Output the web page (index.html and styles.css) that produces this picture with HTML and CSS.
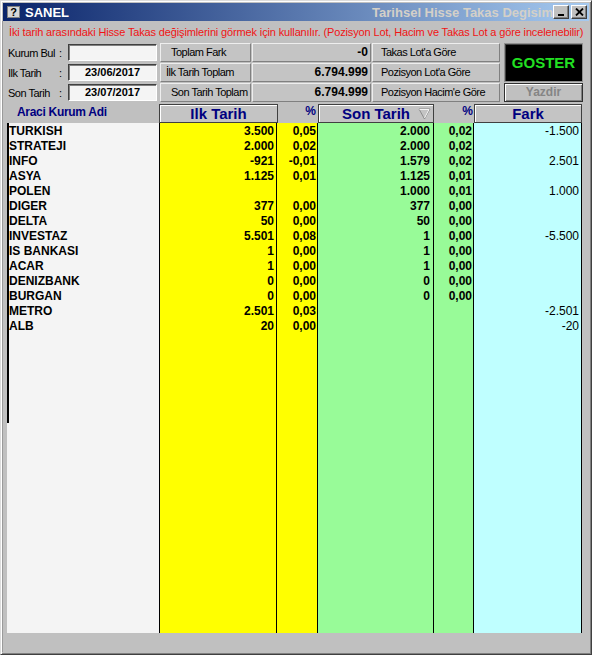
FILE: index.html
```html
<!DOCTYPE html>
<html>
<head>
<meta charset="utf-8">
<link rel="stylesheet" href="styles.css">
</head>
<body>
<div class="window">
  <div class="titlebar">
    <span class="ticon">?</span>
    <span class="ttitle">SANEL</span>
    <span class="tsub">Tarihsel Hisse Takas Degisim</span>
    <span class="tbtns">
      <span class="tbtn"><svg width="8" height="8" viewBox="0 0 8 8"><rect x="1" y="6" width="6" height="2" fill="#000"/></svg></span>
      <span class="tbtn"><svg width="9" height="8" viewBox="0 0 9 8"><path d="M1 0.5 L8 7.5 M8 0.5 L1 7.5" stroke="#000" stroke-width="1.8"/></svg></span>
    </span>
  </div>
  <div class="client">
    <div class="info">İki tarih arasındaki Hisse Takas değişimlerini görmek için kullanılır. (Pozisyon Lot, Hacim ve Takas Lot a göre incelenebilir)</div>
    <div class="controls">
      <div class="lbl"><span class="lname">Kurum Bul</span><span>:</span></div>
      <div class="inp"></div>
      <div class="btn">Toplam Fark</div>
      <div class="val">-0</div>
      <div class="btn btn-r">Takas Lot'a Göre</div>
      <div class="goster">GOSTER</div>

      <div class="lbl"><span class="lname">Ilk Tarih</span><span>:</span></div>
      <div class="inp">23/06/2017</div>
      <div class="btn btn-i">İlk Tarih Toplam</div>
      <div class="val">6.794.999</div>
      <div class="btn btn-r">Pozisyon Lot'a Göre</div>

      <div class="lbl"><span class="lname">Son Tarih</span><span>:</span></div>
      <div class="inp">23/07/2017</div>
      <div class="btn">Son Tarih Toplam</div>
      <div class="val">6.794.999</div>
      <div class="btn btn-r">Pozisyon Hacim'e Göre</div>
      <div class="yazdir">Yazdir</div>
    </div>
    <div class="grid">
      <div class="ghead">
        <div class="h-name">Araci Kurum Adi</div>
        <div class="h-box h-ilk">Ilk Tarih</div>
        <div class="h-pct h-p1">%</div>
        <div class="h-box h-son">Son Tarih<svg class="sort" width="13" height="12" viewBox="0 0 13 12"><path d="M1 1 L12 1 L6.5 11 Z" fill="none" stroke="#8c8c8c" stroke-width="1"/><path d="M1.5 1.5 L11 1.5 L6.5 10" fill="none" stroke="#f4f4f4" stroke-width="1"/></svg></div>
        <div class="h-pct h-p2">%</div>
        <div class="h-box h-fark">Fark</div>
      </div>
      <div class="gbody">
        <div class="c c-name">
          <div class="r">TURKISH</div><div class="r">STRATEJI</div><div class="r">INFO</div><div class="r">ASYA</div><div class="r">POLEN</div><div class="r">DIGER</div><div class="r">DELTA</div><div class="r">INVESTAZ</div><div class="r">IS BANKASI</div><div class="r">ACAR</div><div class="r">DENIZBANK</div><div class="r">BURGAN</div><div class="r">METRO</div><div class="r">ALB</div>
        </div>
        <div class="c c-ilk">
          <div class="r">3.500</div><div class="r">2.000</div><div class="r">-921</div><div class="r">1.125</div><div class="r"></div><div class="r">377</div><div class="r">50</div><div class="r">5.501</div><div class="r">1</div><div class="r">1</div><div class="r">0</div><div class="r">0</div><div class="r">2.501</div><div class="r">20</div>
        </div>
        <div class="c c-p1">
          <div class="r">0,05</div><div class="r">0,02</div><div class="r">-0,01</div><div class="r">0,01</div><div class="r"></div><div class="r">0,00</div><div class="r">0,00</div><div class="r">0,08</div><div class="r">0,00</div><div class="r">0,00</div><div class="r">0,00</div><div class="r">0,00</div><div class="r">0,03</div><div class="r">0,00</div>
        </div>
        <div class="c c-son">
          <div class="r">2.000</div><div class="r">2.000</div><div class="r">1.579</div><div class="r">1.125</div><div class="r">1.000</div><div class="r">377</div><div class="r">50</div><div class="r">1</div><div class="r">1</div><div class="r">1</div><div class="r">0</div><div class="r">0</div><div class="r"></div><div class="r"></div>
        </div>
        <div class="c c-p2">
          <div class="r">0,02</div><div class="r">0,02</div><div class="r">0,02</div><div class="r">0,01</div><div class="r">0,01</div><div class="r">0,00</div><div class="r">0,00</div><div class="r">0,00</div><div class="r">0,00</div><div class="r">0,00</div><div class="r">0,00</div><div class="r">0,00</div><div class="r"></div><div class="r"></div>
        </div>
        <div class="c c-fark">
          <div class="r">-1.500</div><div class="r"></div><div class="r">2.501</div><div class="r"></div><div class="r">1.000</div><div class="r"></div><div class="r"></div><div class="r">-5.500</div><div class="r"></div><div class="r"></div><div class="r"></div><div class="r"></div><div class="r">-2.501</div><div class="r">-20</div>
        </div>
      </div>
    </div>
  </div>
</div>
</body>
</html>
```
FILE: styles.css
```css
* { box-sizing: border-box; }
body {
  margin: 0;
  background: #c0c0c0;
  font-family: "Liberation Sans", Arial, sans-serif;
}
.window {
  width: 592px;
  height: 655px;
  background: #c0c0c0;
  border: 1px solid;
  border-color: #dcdcdc #404040 #404040 #dcdcdc;
  box-shadow: inset 1px 1px #ffffff, inset -1px -1px #808080;
  padding: 2px;
  display: flex;
  flex-direction: column;
}
.titlebar {
  height: 18px;
  flex: none;
  background: linear-gradient(90deg, #0a246a, #a6caf0);
  display: flex;
  align-items: center;
  padding: 0 2px 0 4px;
}
.ticon {
  width: 13px;
  height: 12px;
  background: #d8d8d8;
  border: 1px solid #808080;
  color: #000;
  font-weight: bold;
  font-size: 11px;
  line-height: 10px;
  text-align: center;
}
.ttitle {
  color: #ffffff;
  font-weight: bold;
  font-size: 13px;
  margin-left: 5px;
}
.tsub {
  flex: 1;
  text-align: right;
  color: #d4d0c8;
  font-weight: bold;
  font-size: 13px;
  white-space: nowrap;
  overflow: hidden;
}
.tbtns {
  display: flex;
  gap: 2px;
}
.tbtn {
  width: 16px;
  height: 14px;
  background: #c0c0c0;
  border: 1px solid;
  border-color: #ffffff #404040 #404040 #ffffff;
  box-shadow: inset -1px -1px #808080;
  display: flex;
  align-items: center;
  justify-content: center;
}
.client {
  flex: 1;
  display: flex;
  flex-direction: column;
  border-left: 1px solid #9a9a9a;
  margin-left: -1px;
}
.info {
  height: 22px;
  line-height: 22px;
  padding-left: 6px;
  color: #f01414;
  font-size: 11px;
  letter-spacing: -0.14px;
  white-space: nowrap;
  overflow: hidden;
}
.controls {
  display: grid;
  grid-template-columns: 59px 91px 91px 119px 128px 82px;
  grid-template-rows: 19px 19px 19px;
  gap: 1px;
  padding-left: 5px;
}
.lbl {
  display: flex;
  align-items: center;
  font-size: 11px;
  letter-spacing: -0.5px;
}
.lname { width: 51px; }
.inp {
  align-self: center;
  width: 89px;
  height: 17px;
  background: #f4f4f4;
  border: 1px solid;
  border-color: #404040 #ffffff #ffffff #404040;
  box-shadow: inset 1px 1px #808080;
  font-weight: bold;
  font-size: 11px;
  text-align: center;
  line-height: 15px;
}
.btn {
  background: #c4c4c4;
  border: 1px solid;
  border-color: #eeeeee #808080 #808080 #eeeeee;
  font-size: 11px;
  letter-spacing: -0.5px;
  padding-left: 10px;
  line-height: 17px;
  white-space: nowrap;
  overflow: hidden;
}
.btn-i { padding-left: 5px; }
.btn-r { padding-left: 8px; }
.val {
  background: #c4c4c4;
  border: 1px solid;
  border-color: #eeeeee #808080 #808080 #eeeeee;
  font-weight: bold;
  font-size: 12px;
  text-align: right;
  padding-right: 2px;
  line-height: 17px;
}
.goster {
  grid-row: 1 / span 2;
  grid-column: 6;
  margin-left: 3px;
  width: 79px;
  background: #000000;
  border: 1px solid #909090;
  box-shadow: inset 1px 1px #404040;
  color: #22e022;
  font-weight: bold;
  font-size: 15px;
  display: flex;
  align-items: center;
  justify-content: center;
}
.yazdir {
  grid-column: 6;
  margin-left: 3px;
  width: 79px;
  background: #c0c0c0;
  border: 1px solid #303030;
  box-shadow: inset 1px 1px #ffffff, inset -1px -1px #808080;
  color: #858585;
  font-weight: bold;
  font-size: 12px;
  text-align: center;
  line-height: 17px;
}
.grid {
  margin-top: 2px;
  padding-left: 4px;
  display: flex;
  flex-direction: column;
}
.ghead {
  display: flex;
  height: 19px;
}
.h-name {
  width: 152px;
  padding-left: 10px;
  color: #000080;
  font-weight: bold;
  font-size: 12px;
  letter-spacing: -0.3px;
  line-height: 17px;
}
.h-box {
  position: relative;
  border: 1px solid #404040;
  box-shadow: inset 1px 1px #ffffff;
  background: #c4c4c4;
  text-align: center;
  color: #000080;
  font-weight: bold;
  font-size: 15px;
  line-height: 17px;
}
.h-ilk { width: 119px; }
.h-son { width: 116px; }
.h-fark { width: 108px; }
.h-pct {
  width: 40px;
  text-align: right;
  color: #000080;
  font-weight: bold;
  font-size: 12px;
  line-height: 15px;
}
.h-p1 { padding-right: 2px; }
.h-p2 { padding-right: 1px; }
.sort {
  position: absolute;
  right: 2px;
  top: 3px;
}
.gbody {
  display: flex;
  height: 510px;
}
.c {
  border-right: 1px solid #000000;
  padding-top: 1px;
  text-align: right;
}
.r {
  height: 15px;
  line-height: 15px;
  font-weight: bold;
  font-size: 12px;
  white-space: nowrap;
}
.c-name {
  width: 153px;
  text-align: left;
  padding-left: 2px;
  background: linear-gradient(#000000, #000000) 0 0 / 2px 300px no-repeat, #f4f4f4;
}
.c-ilk { width: 117px; background: #ffff00; padding-right: 2px; }
.c-p1 { width: 41px; background: #ffff00; padding-right: 1px; }
.c-son { width: 116px; background: #98fb98; padding-right: 3px; }
.c-p2 { width: 40px; background: #98fb98; padding-right: 1px; }
.c-fark { width: 108px; background: #bfffff; padding-right: 2px; }
.c-fark .r { font-weight: normal; }
```
